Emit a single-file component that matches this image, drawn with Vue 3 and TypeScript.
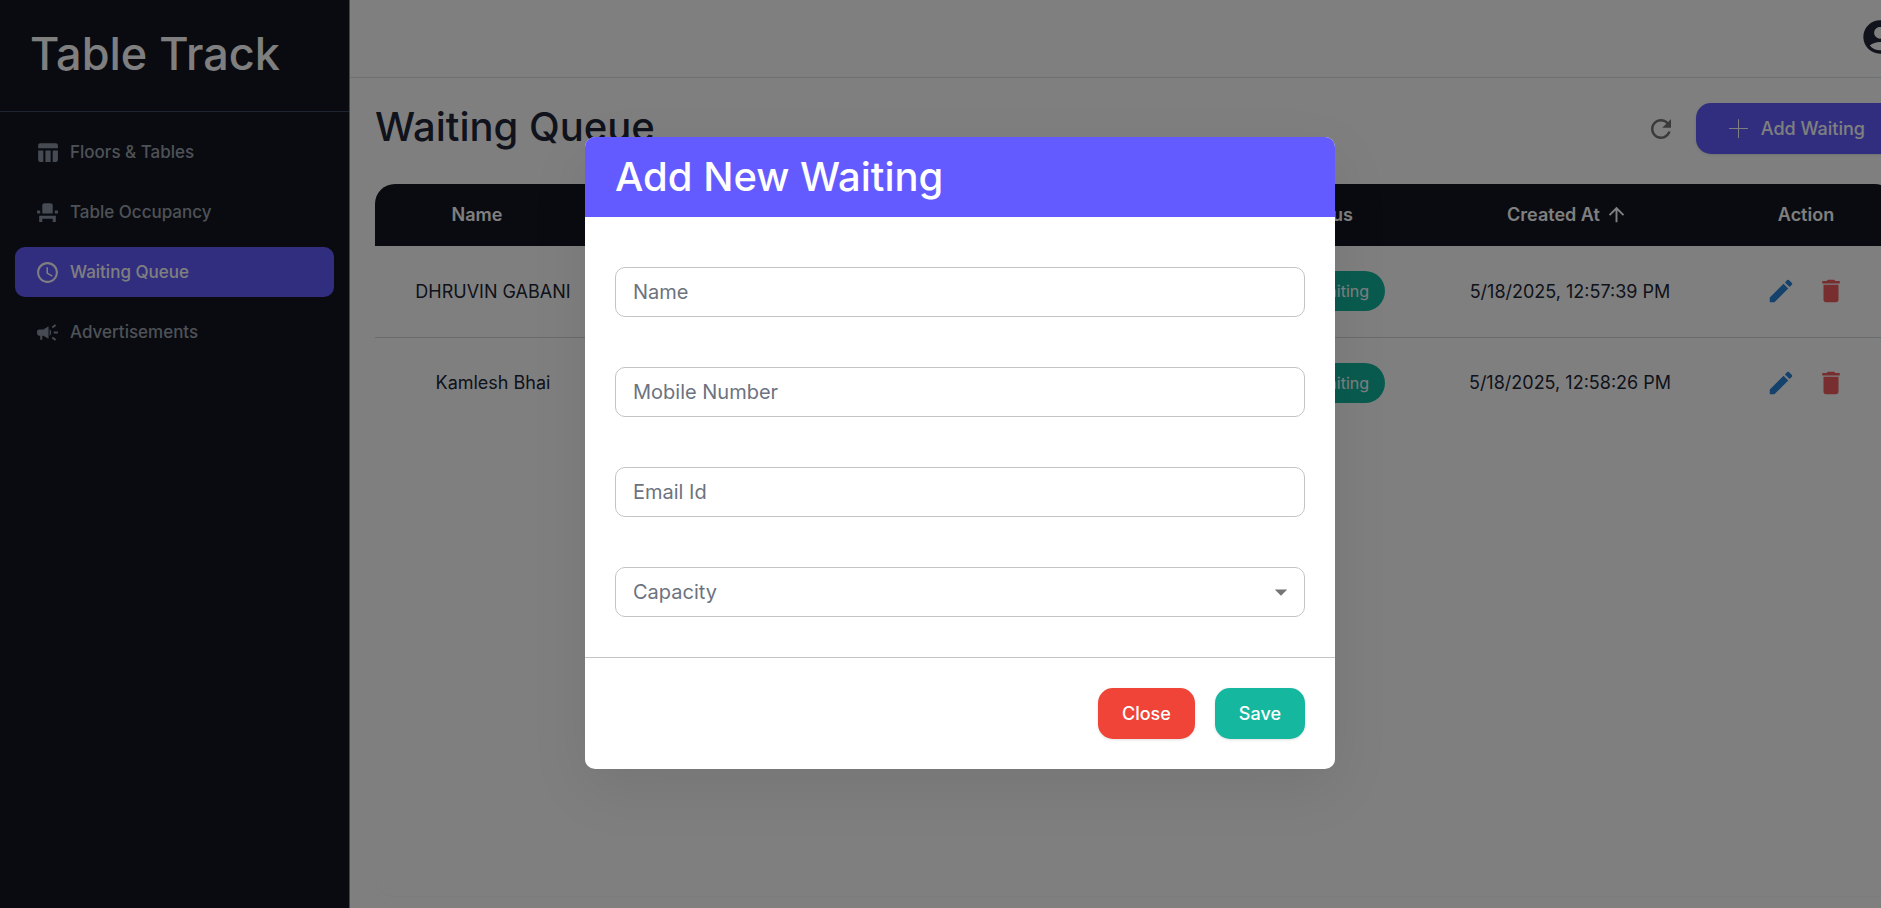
<script setup lang="ts">
import { ref } from 'vue'

interface NavItem {
  label: string
  icon: string
  active?: boolean
}

interface Field {
  id: string
  label: string
  type: string
}

interface QueueRow {
  name: string
  status: string
  createdAt: string
}

const navItems: NavItem[] = [
  {
    label: 'Floors & Tables',
    icon: 'M10 10.02h5V21h-5zM17 21h3c1.1 0 2-.9 2-2v-9h-5zm3-18H5c-1.1 0-2 .9-2 2v3h19V5c0-1.1-.9-2-2-2M3 19c0 1.1.9 2 2 2h3V10H3z',
  },
  {
    label: 'Table Occupancy',
    icon: 'M4 18v3h3v-3h10v3h3v-6H4zm15-8h3v3h-3zM2 10h3v3H2zm15 3H7V5c0-1.1.9-2 2-2h6c1.1 0 2 .9 2 2z',
  },
  {
    label: 'Waiting Queue',
    icon: 'M11.99 2C6.47 2 2 6.48 2 12s4.47 10 9.99 10C17.52 22 22 17.52 22 12S17.52 2 11.99 2M12 20c-4.42 0-8-3.58-8-8s3.58-8 8-8 8 3.58 8 8-3.58 8-8 8m.5-13H11v6l5.25 3.15.75-1.23-4.5-2.67z',
    active: true,
  },
  {
    label: 'Advertisements',
    icon: 'M18 11v2h4v-2zm-2 6.61c.96.71 2.21 1.65 3.2 2.39.4-.53.8-1.07 1.2-1.6-.99-.74-2.24-1.68-3.2-2.4-.4.54-.8 1.08-1.2 1.61M20.4 5.6c-.4-.53-.8-1.07-1.2-1.6-.99.74-2.24 1.68-3.2 2.4.4.53.8 1.07 1.2 1.6.96-.72 2.21-1.65 3.2-2.4M4 9c-1.1 0-2 .9-2 2v2c0 1.1.9 2 2 2h1v4h2v-4h1l5 3V6L8 9zm11.5 3c0-1.33-.58-2.53-1.5-3.35v6.69c.92-.81 1.5-2.01 1.5-3.34',
  },
]

const fields: Field[] = [
  { id: 'name', label: 'Name', type: 'text' },
  { id: 'mobile', label: 'Mobile Number', type: 'tel' },
  { id: 'email', label: 'Email Id', type: 'email' },
]

const rows: QueueRow[] = [
  { name: 'DHRUVIN GABANI', status: 'Waiting', createdAt: '5/18/2025, 12:57:39 PM' },
  { name: 'Kamlesh Bhai', status: 'Waiting', createdAt: '5/18/2025, 12:58:26 PM' },
]

const values = ref<Record<string, string>>({ name: '', mobile: '', email: '' })
const capacity = ref('')
</script>

<template>
  <div class="viewport">
    <div class="page">
      <aside class="sidebar">
        <div class="brand">Table Track</div>
        <nav class="nav">
          <a
            v-for="item in navItems"
            :key="item.label"
            href="#"
            class="nav-link"
            :class="{ active: item.active }"
          >
            <svg class="nav-icon" viewBox="0 0 24 24" aria-hidden="true"><path :d="item.icon" /></svg>
            <span>{{ item.label }}</span>
          </a>
        </nav>
      </aside>

      <div class="main">
        <header class="topbar">
          <button class="icon-button avatar" type="button" aria-label="Account">
            <svg viewBox="0 0 24 24" aria-hidden="true">
              <path
                d="M12 2C6.48 2 2 6.48 2 12s4.48 10 10 10 10-4.48 10-10S17.52 2 12 2m0 4c1.93 0 3.5 1.57 3.5 3.5S13.93 13 12 13s-3.5-1.57-3.5-3.5S10.07 6 12 6m0 14c-2.03 0-4.43-.82-6.14-2.88C7.55 15.8 9.68 15 12 15s4.45.8 6.14 2.12C16.43 19.18 14.03 20 12 20"
              />
            </svg>
          </button>
        </header>

        <main class="content">
          <div class="heading">
            <h1>Waiting Queue</h1>
            <button class="icon-button refresh" type="button" aria-label="Refresh">
              <svg viewBox="0 0 24 24" aria-hidden="true">
                <path
                  d="M17.65 6.35C16.2 4.9 14.21 4 12 4c-4.42 0-7.99 3.58-7.99 8s3.57 8 7.99 8c3.73 0 6.84-2.55 7.73-6h-2.08c-.82 2.33-3.04 4-5.65 4-3.31 0-6-2.69-6-6s2.69-6 6-6c1.66 0 3.14.69 4.22 1.78L13 11h7V4z"
                />
              </svg>
            </button>
            <button class="button primary" type="button">
              <svg viewBox="0 0 24 24" aria-hidden="true"><path d="M12 3v18M3 12h18" /></svg>
              Add Waiting
            </button>
          </div>

          <section class="card">
            <table>
              <colgroup>
                <col class="col-name" />
                <col />
                <col class="col-status" />
                <col class="col-created" />
                <col class="col-action" />
              </colgroup>
              <thead>
                <tr>
                  <th scope="col"><span class="sortable">Name</span></th>
                  <td></td>
                  <th scope="col"><span class="sortable">Status</span></th>
                  <th scope="col">
                    <span class="sortable sorted">
                      Created At
                      <svg viewBox="0 0 24 24" aria-hidden="true">
                        <path d="M4 12l1.41 1.41L11 7.83V20h2V7.83l5.58 5.59L20 12l-8-8z" />
                      </svg>
                    </span>
                  </th>
                  <th scope="col">Action</th>
                </tr>
              </thead>
              <tbody>
                <tr v-for="row in rows" :key="row.name">
                  <td>{{ row.name }}</td>
                  <td></td>
                  <td><span class="chip">{{ row.status }}</span></td>
                  <td>{{ row.createdAt }}</td>
                  <td>
                    <div class="actions">
                      <button class="icon-button edit" type="button" aria-label="Edit">
                        <svg viewBox="0 0 24 24" aria-hidden="true">
                          <path
                            d="M3 17.25V21h3.75L17.81 9.94l-3.75-3.75zM20.71 7.04c.39-.39.39-1.02 0-1.41l-2.34-2.34a.996.996 0 0 0-1.41 0l-1.83 1.83 3.75 3.75z"
                          />
                        </svg>
                      </button>
                      <button class="icon-button delete" type="button" aria-label="Delete">
                        <svg viewBox="0 0 24 24" aria-hidden="true">
                          <path d="M6 19c0 1.1.9 2 2 2h8c1.1 0 2-.9 2-2V7H6zM19 4h-3.5l-1-1h-5l-1 1H5v2h14z" />
                        </svg>
                      </button>
                    </div>
                  </td>
                </tr>
              </tbody>
            </table>
          </section>
        </main>
      </div>

      <div class="backdrop">
        <form class="dialog" role="dialog" aria-modal="true" aria-labelledby="dialog-title" @submit.prevent>
          <h2 id="dialog-title">Add New Waiting</h2>
          <div class="fields">
            <input
              v-for="field in fields"
              :key="field.id"
              v-model="values[field.id]"
              class="control"
              :type="field.type"
              :placeholder="field.label"
              :aria-label="field.label"
            />
            <div class="select-wrap">
              <select v-model="capacity" class="control" aria-label="Capacity">
                <option value="">Capacity</option>
              </select>
              <svg class="caret" viewBox="0 0 24 24" aria-hidden="true"><path d="M7 10l5 5 5-5z" /></svg>
            </div>
          </div>
          <footer class="dialog-actions">
            <button class="button danger" type="button">Close</button>
            <button class="button success" type="submit">Save</button>
          </footer>
        </form>
      </div>
    </div>
  </div>
</template>

<style>
body {
  margin: 0;
}
</style>

<style scoped>
* {
  box-sizing: border-box;
}

.viewport {
  height: 100vh;
  overflow: hidden;
  font-family: Inter, 'Liberation Sans', sans-serif;
  font-size: 18px;
  color: #212636;
}

.page {
  position: relative;
  display: flex;
  width: calc(100% + 39px);
  height: 100%;
  background: #fff;
}

button,
input,
select {
  font: inherit;
}

button {
  cursor: pointer;
}

.sidebar {
  flex: none;
  width: 350px;
  border-right: 1px solid #8a8d94;
  background: #121621;
}

.brand {
  padding: 26px 30px 29px;
  border-bottom: 1px solid #3c4a64;
  color: #fff;
  font-size: 45px;
  font-weight: 500;
  line-height: 56px;
}

.nav {
  display: flex;
  flex-direction: column;
  gap: 10px;
  padding: 15px;
}

.nav-link {
  display: flex;
  align-items: center;
  gap: 10px;
  height: 50px;
  padding: 0 20px;
  border-radius: 10px;
  color: #9da4ae;
  font-size: 17px;
  font-weight: 500;
  text-decoration: none;
}

.nav-icon {
  width: 25px;
  height: 25px;
  fill: #8a94a6;
}

.nav-link.active {
  background: #635bff;
  color: #fff;
}

.active .nav-icon {
  fill: #fff;
}

.main {
  display: flex;
  flex: 1;
  flex-direction: column;
  min-width: 0;
}

.topbar {
  display: flex;
  align-items: center;
  justify-content: flex-end;
  height: 78px;
  padding: 0 20px 4px;
  border-bottom: 1px solid #dcdfe4;
}

.icon-button {
  display: flex;
  padding: 0;
  border: 0;
  background: none;
}

.icon-button svg {
  width: 30px;
  height: 30px;
  fill: currentColor;
}

.avatar {
  color: #212636;
}

.avatar svg {
  width: 40px;
  height: 40px;
}

.content {
  display: flex;
  flex: 1;
  flex-direction: column;
  gap: 30px;
  padding: 25px 25px 12px;
}

.heading {
  display: flex;
  align-items: center;
  gap: 20px;
}

h1 {
  flex: 1;
  align-self: flex-start;
  margin: 0;
  font-size: 40px;
  font-weight: 500;
  line-height: 48px;
}

.refresh {
  color: #757575;
}

.button {
  display: flex;
  align-items: center;
  height: 51px;
  padding: 0 24px;
  border: 0;
  border-radius: 15px;
  color: #fff;
  font-size: 18px;
  font-weight: 500;
  box-shadow: 0 1px 3px rgba(0, 0, 0, 0.12);
}

.button svg {
  width: 25px;
  height: 25px;
  margin-right: 10px;
  fill: none;
  stroke: currentColor;
}

.primary {
  padding: 0 30px;
  background: #635bff;
}

.danger {
  background: #f04438;
}

.success {
  background: #15b79f;
}

.card {
  flex: 1;
  overflow: hidden;
  border-radius: 20px;
  box-shadow: 0 1px 2px rgba(0, 0, 0, 0.04);
}

table {
  width: 100%;
  border-collapse: collapse;
  table-layout: fixed;
  text-align: center;
}

.col-name {
  width: 236px;
}

.col-status {
  width: 164px;
}

.col-created {
  width: 294px;
}

.col-action {
  width: 178px;
}

thead tr {
  height: 62px;
  background: #121621;
}

th,
td {
  padding: 0;
}

th {
  padding-bottom: 2px;
  color: #fff;
  font-weight: 600;
}

.sortable {
  display: inline-flex;
  align-items: center;
  padding-right: 32px;
}

.sorted {
  padding-right: 5px;
}

.sortable svg {
  width: 23px;
  height: 23px;
  margin-left: 5px;
  fill: currentColor;
}

tbody tr {
  height: 91px;
}

tbody tr:not(:last-child) {
  border-bottom: 1px solid #d2d6dc;
}

.chip {
  display: inline-block;
  padding: 0 16px;
  border-radius: 20px;
  background: #15b79f;
  color: #fff;
  font-size: 16px;
  line-height: 40px;
}

.actions {
  display: flex;
  justify-content: center;
  gap: 20px;
}

.edit {
  color: #2b84d8;
}

.delete {
  color: #f05a5e;
}

.backdrop {
  position: absolute;
  inset: 0;
  display: flex;
  align-items: center;
  justify-content: center;
  padding-bottom: 2px;
  background: rgba(0, 0, 0, 0.5);
}

.dialog {
  overflow: hidden;
  width: 750px;
  border-radius: 10px;
  background: #fff;
  box-shadow: 0 20px 60px rgba(0, 0, 0, 0.08);
}

h2 {
  margin: 0;
  padding: 0 30px;
  background: #635bff;
  color: #fff;
  font-size: 40px;
  font-weight: 500;
  line-height: 80px;
}

.fields {
  display: flex;
  flex-direction: column;
  gap: 50px;
  padding: 50px 30px 40px;
}

.control {
  appearance: none;
  width: 100%;
  height: 50px;
  padding: 0 17px;
  border: 1px solid #c4c4c4;
  border-radius: 10px;
  background: #fff;
  color: #6c737f;
  font-size: 20px;
}

.control::placeholder {
  color: #6c737f;
  opacity: 1;
}

.select-wrap {
  position: relative;
}

.caret {
  position: absolute;
  top: 10px;
  right: 9px;
  width: 30px;
  height: 30px;
  fill: #757575;
  pointer-events: none;
}

.dialog-actions {
  display: flex;
  justify-content: flex-end;
  gap: 20px;
  padding: 30px;
  border-top: 1px solid #c4c4c4;
}
</style>
